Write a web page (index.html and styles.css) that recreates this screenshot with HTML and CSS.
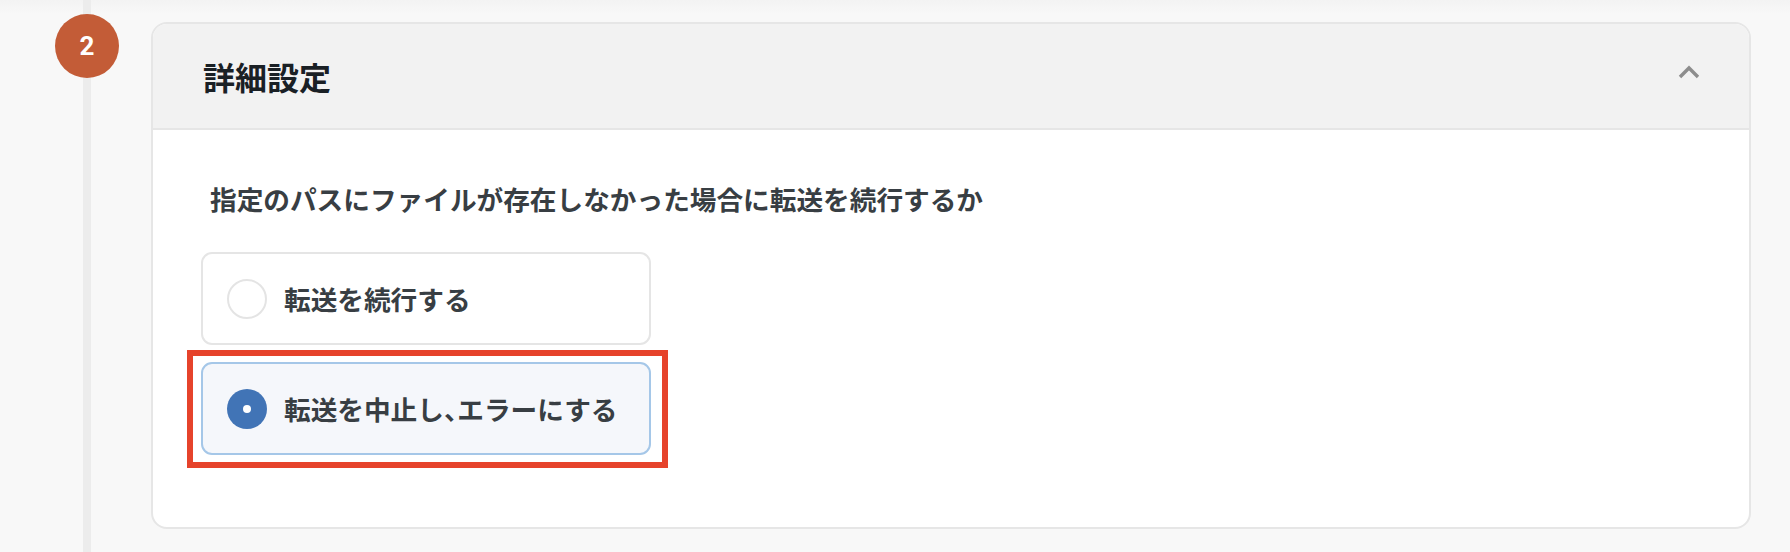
FILE: index.html
```html
<!DOCTYPE html>
<html lang="ja">
<head>
<meta charset="utf-8">
<link rel="stylesheet" href="styles.css">
</head>
<body>
<div class="page">
  <div class="timeline">
    <div class="step">2</div>
  </div>
  <section class="card">
    <header class="card-header">
      <h2 class="card-title">詳細設定</h2>
      <svg class="chevron" width="22" height="14" viewBox="0 0 22 14"><path d="M2 12 L11 3 L20 12" fill="none" stroke="#8d8d8d" stroke-width="3.4"/></svg>
    </header>
    <div class="card-body">
      <p class="question">指定のパスにファイルが存在しなかった場合に転送を続行するか</p>
      <div class="options">
        <label class="option">
          <span class="radio"></span>
          <span class="option-label">転送を続行する</span>
        </label>
        <label class="option selected">
          <span class="radio"><span class="dot"></span></span>
          <span class="option-label">転送を中止し<span class="half">、</span>エラーにする</span>
          <span class="highlight"></span>
        </label>
      </div>
    </div>
  </section>
</div>
</body>
</html>
```

FILE: styles.css
```css
html, body {
  margin: 0;
  padding: 0;
}
body {
  background: linear-gradient(to bottom, #f3f3f3 0px, #f8f8f8 14px, #f8f8f8 100%);
  font-family: "Noto Sans CJK JP", "Noto Sans", sans-serif;
  width: 1790px;
  height: 552px;
  overflow: hidden;
}
.page {
  display: flex;
  align-items: flex-start;
  height: 552px;
}
.timeline {
  width: 151px;
  flex: 0 0 151px;
  height: 552px;
  background: linear-gradient(to right, transparent 83px, #ececec 83px, #ececec 91px, transparent 91px);
}
.step {
  width: 64px;
  height: 64px;
  margin: 14px 0 0 55px;
  border-radius: 50%;
  background: #c35c37;
  color: #fff;
  font-family: Roboto, "Noto Sans", sans-serif;
  font-weight: 700;
  font-size: 26px;
  display: flex;
  align-items: center;
  justify-content: center;
  line-height: 1;
}
.card {
  margin-top: 22px;
  width: 1600px;
  box-sizing: border-box;
  border: 2px solid #e6e6e6;
  border-radius: 16px;
  overflow: hidden;
  background: #fff;
}
.card-header {
  height: 104px;
  background: #f2f2f2;
  border-bottom: 2px solid #e6e6e6;
  display: flex;
  align-items: center;
  justify-content: space-between;
  padding: 0 49px 0 50px;
}
.card-title {
  margin: 0;
  font-size: 32px;
  font-weight: 700;
  color: #1a2025;
  line-height: 40px;
}
.chevron {
  display: block;
  margin-top: -8px;
}
.card-body {
  padding: 49px 48px 72px;
}
.question {
  margin: 0 0 33px 9px;
  font-size: 26.67px;
  line-height: 40px;
  font-weight: 700;
  color: #383e43;
}
.options {
  display: flex;
  flex-direction: column;
  gap: 16.67px;
}
.option {
  position: relative;
  box-sizing: border-box;
  width: 450px;
  height: 93.33px;
  border: 2px solid #e5e5e5;
  border-radius: 11px;
  background: #fff;
  display: flex;
  align-items: center;
  padding-left: 24px;
  gap: 17px;
}
.option.selected {
  background: #f5f7fb;
  border-color: #a5c7e8;
}
.radio {
  box-sizing: border-box;
  width: 40px;
  height: 40px;
  border-radius: 50%;
  border: 2px solid #e4e4e4;
  background: #fff;
  display: flex;
  align-items: center;
  justify-content: center;
  flex: 0 0 40px;
}
.selected .radio {
  border: none;
  background: #4174b6;
}
.dot {
  width: 8px;
  height: 8px;
  border-radius: 50%;
  background: #fff;
}
.option-label {
  font-size: 26.67px;
  font-weight: 700;
  color: #383e43;
  line-height: 40px;
}
.half {
  font-feature-settings: "halt" 1;
}
.highlight {
  position: absolute;
  left: -16px;
  right: -19px;
  top: -14px;
  bottom: -15px;
  border: 6px solid #e6432b;
  pointer-events: none;
}
```
